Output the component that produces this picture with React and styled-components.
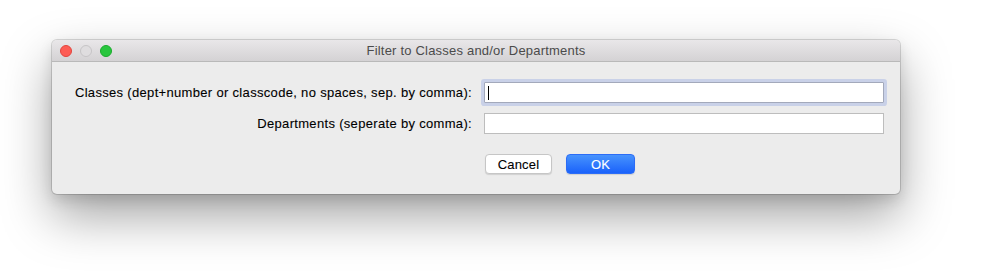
import React from "react";
import styled, { createGlobalStyle } from "styled-components";

const GlobalStyle = createGlobalStyle`
  html, body {
    margin: 0;
    padding: 0;
    background: #ffffff;
  }
  body {
    font-family: "Liberation Sans", Arial, sans-serif;
  }
`;

const Page = styled.div`
  width: 986px;
  height: 276px;
  padding: 40px 0 0 52px;
  box-sizing: border-box;
  overflow: hidden;
`;

const Window = styled.div`
  width: 848px;
  border-radius: 5px;
  background: #ececec;
  box-shadow: 0 0 0 1px rgba(0, 0, 0, 0.14), 0 22px 50px rgba(0, 0, 0, 0.36),
    0 6px 14px rgba(0, 0, 0, 0.12);
  overflow: hidden;
`;

const TitleBar = styled.div`
  height: 22px;
  display: flex;
  align-items: center;
  position: relative;
  background: linear-gradient(#e9e7e9, #d4d2d4);
  border-bottom: 1px solid #b9b9b9;
  box-sizing: border-box;
`;

const Lights = styled.div`
  display: flex;
  gap: 8px;
  padding-left: 8px;
`;

const Light = styled.span`
  width: 12px;
  height: 12px;
  border-radius: 50%;
  box-sizing: border-box;
  background: ${(p) => p.$fill};
  border: 1px solid ${(p) => p.$edge};
`;

const Title = styled.div`
  position: absolute;
  left: 0;
  right: 0;
  text-align: center;
  font-size: 13px;
  letter-spacing: 0.2px;
  color: #4b4b4b;
  pointer-events: none;
`;

const Body = styled.div`
  display: grid;
  grid-template-columns: auto 400px;
  justify-content: end;
  column-gap: 12px;
  row-gap: 10px;
  padding: 20px 16px 20px 16px;
`;

const Label = styled.label`
  font-size: 13px;
  letter-spacing: 0.32px;
  color: #000;
  text-align: right;
  align-self: center;
  white-space: nowrap;
  -webkit-text-stroke: 0.1px #000;
`;

const FieldWrap = styled.div`
  position: relative;
  height: 21px;
  ${(p) =>
    p.$focused &&
    `
    &::after {
      content: "";
      position: absolute;
      left: 4px;
      top: 4px;
      width: 1px;
      height: 14px;
      background: #000;
    }
  `}
`;

const Field = styled.input`
  width: 100%;
  height: 21px;
  box-sizing: border-box;
  margin: 0;
  border: 1px solid ${(p) => (p.$focused ? "#a3a9bb" : "#bdbdbd")};
  background: #fff;
  outline: none;
  font-size: 13px;
  padding: 0 3px;
  caret-color: transparent;
  box-shadow: ${(p) => (p.$focused ? "0 0 0 3px #c9d1e8" : "none")};
  border-radius: ${(p) => (p.$focused ? "1px" : "0")};
`;

const Buttons = styled.div`
  grid-column: 2;
  display: flex;
  gap: 14px;
  margin-top: 10px;
  padding-left: 1px;
`;

const Button = styled.button`
  height: 20px;
  width: ${(p) => p.$w}px;
  box-sizing: border-box;
  border-radius: 4px;
  font-family: "Liberation Sans", Arial, sans-serif;
  font-size: 13px;
  letter-spacing: 0.2px;
  padding: 0;
  cursor: default;
  color: ${(p) => (p.$primary ? "#ffffff" : "#000000")};
  -webkit-text-stroke: 0.1px ${(p) => (p.$primary ? "#ffffff" : "#000000")};
  background: ${(p) =>
    p.$primary ? "linear-gradient(#4793fd, #1a62fb)" : "#ffffff"};
  border: 1px solid ${(p) => (p.$primary ? "#2c6cf6" : "#c6c6c6")};
  box-shadow: 0 1px 1px rgba(0, 0, 0, 0.12);
`;

export default function App() {
  return (
    <>
      <GlobalStyle />
      <Page>
        <Window>
          <TitleBar>
            <Lights>
              <Light $fill="#fd5c55" $edge="#e2443d" />
              <Light $fill="#dfdddf" $edge="#c6c4c6" />
              <Light $fill="#29c63e" $edge="#1aab2c" />
            </Lights>
            <Title>Filter to Classes and/or Departments</Title>
          </TitleBar>
          <Body>
            <Label>Classes (dept+number or classcode, no spaces, sep. by comma):</Label>
            <FieldWrap $focused>
              <Field $focused />
            </FieldWrap>
            <Label>Departments (seperate by comma):</Label>
            <FieldWrap>
              <Field />
            </FieldWrap>
            <Buttons>
              <Button $w={67}>Cancel</Button>
              <Button $w={69} $primary>
                OK
              </Button>
            </Buttons>
          </Body>
        </Window>
      </Page>
    </>
  );
}
